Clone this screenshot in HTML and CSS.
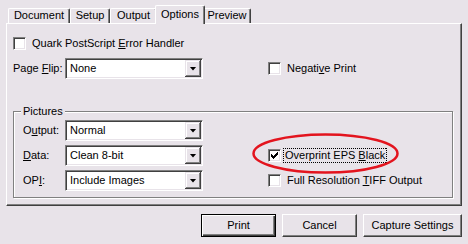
FILE: index.html
```html
<!DOCTYPE html>
<html lang="en">
  <head>
    <meta charset="UTF-8" />
    <title>Print Options</title>
    <link rel="stylesheet" href="styles.css">
  </head>
  <body>
    <div class="dialog">
      <div class="tabs">
        <div class="tab tab-document">Document</div>
        <div class="tab tab-setup">Setup</div>
        <div class="tab tab-output">Output</div>
        <div class="tab tab-options selected">Options</div>
        <div class="tab tab-preview">Preview</div>
      </div>

      <div class="panel">
        <label class="check-row">
          <span class="box"></span>
          <span>Quark PostScript <u>E</u>rror Handler</span>
        </label>

        <div class="fields top-fields">
          <span>Page <u>F</u>lip:</span>
          <div class="combo">
            <span class="combo-text">None</span>
            <span class="combo-btn"></span>
          </div>
          <span></span>
          <label class="check-row">
            <span class="box"></span>
            <span>Negati<u>v</u>e Print</span>
          </label>
        </div>

        <fieldset class="group">
          <legend>Pictures</legend>
          <div class="fields">
            <span>O<u>u</u>tput:</span>
            <div class="combo">
              <span class="combo-text">Normal</span>
              <span class="combo-btn"></span>
            </div>
            <span></span>
            <span></span>

            <span><u>D</u>ata:</span>
            <div class="combo">
              <span class="combo-text">Clean 8-bit</span>
              <span class="combo-btn"></span>
            </div>
            <span></span>
            <label class="check-row">
              <span class="box checked">
                <svg width="7" height="7" viewBox="0 0 7 7"><path d="M0 2L2 4L7 -1L7 2L2 7L0 5Z" fill="#000" /></svg>
              </span>
              <span class="focus">Overprint EPS <u>B</u>lack</span>
            </label>

            <span>OP<u>I</u>:</span>
            <div class="combo">
              <span class="combo-text">Include Images</span>
              <span class="combo-btn"></span>
            </div>
            <span></span>
            <label class="check-row">
              <span class="box"></span>
              <span>Full Resolution <u>T</u>IFF Output</span>
            </label>
          </div>
        </fieldset>
      </div>

      <div class="buttons">
        <button class="btn btn-default btn-print">Print</button>
        <button class="btn btn-cancel">Cancel</button>
        <button class="btn btn-capture">Capture Settings</button>
      </div>

      <!-- red marker drawn over the dialog -->
      <svg class="highlight" width="148" height="41" viewBox="0 0 148 41">
        <ellipse cx="73.5" cy="20.5" rx="72" ry="19" fill="none" stroke="#e3141e" stroke-width="2.5" />
      </svg>
    </div>
  </body>
</html>
```

FILE: styles.css
```css
body {
  margin: 0;
  background: #e8e3e9;
  font-family: "Liberation Sans", Arial, sans-serif;
  font-size: 11px;
  line-height: 13px;
  color: #000;
}

.dialog {
  position: relative;
  padding: 5px 6px 0;
}

/* tab strip */
.tabs {
  display: flex;
  align-items: flex-end;
  height: 18px;
  padding-left: 2px;
}

.tab {
  box-sizing: border-box;
  height: 15px;
  border-top: 1px solid #fff;
  border-left: 1px solid #fff;
  border-right: 1px solid #404040;
  border-radius: 2px 2px 0 0;
  box-shadow: inset -1px 0 #808080;
  text-align: center;
}

.tab-document { width: 62px; }
.tab-setup { width: 40px; }
.tab-output { width: 47px; }
.tab-options { width: 46px; }
.tab-preview { width: 48px; }

.tab.selected {
  position: relative;
  z-index: 1;
  width: 50px;
  height: 19px;
  margin: 0 -2px -1px;
  padding-top: 2px;
  background: #e8e3e9;
}

/* page */
.panel {
  border: 1px solid;
  border-color: #fff #404040 #404040 #fff;
  box-shadow: inset -1px -1px #808080;
  padding: 13px 8px 7px 6px;
}

.check-row {
  display: flex;
  align-items: center;
  gap: 6px;
}

.box {
  box-sizing: border-box;
  width: 13px;
  height: 13px;
  flex: none;
  border: 1px solid;
  border-color: #808080 #fff #fff #808080;
  box-shadow: inset 1px 1px #404040, inset -1px -1px #e8e3e9;
  background: #fff;
}

.box.checked {
  display: flex;
  align-items: center;
  justify-content: center;
}

.box svg {
  display: block;
  shape-rendering: crispEdges;
}

/* dotted focus rectangle, one pixel on / one off */
.focus {
  margin-left: -4px;
  padding: 1px 2px;
  background:
    repeating-linear-gradient(90deg, #000 0 1px, transparent 1px 2px) top / 100% 1px no-repeat,
    repeating-linear-gradient(90deg, #000 0 1px, transparent 1px 2px) bottom / 100% 1px no-repeat,
    repeating-linear-gradient(180deg, #000 0 1px, transparent 1px 2px) left / 1px 100% no-repeat,
    repeating-linear-gradient(180deg, #000 0 1px, transparent 1px 2px) right / 1px 100% no-repeat;
}

.fields {
  display: grid;
  grid-template-columns: 42px 138px 65px auto;
  grid-auto-rows: 21px;
  row-gap: 4px;
  align-items: center;
}

.top-fields {
  grid-template-columns: 52px 138px 65px auto;
  margin-top: 8px;
}

.combo {
  box-sizing: border-box;
  height: 21px;
  display: flex;
  padding: 1px;
  border: 1px solid;
  border-color: #808080 #fff #fff #808080;
  box-shadow: inset 1px 1px #404040, inset -1px -1px #e8e3e9;
  background: #fff;
}

.combo-text {
  flex: 1;
  padding-left: 3px;
  align-self: center;
}

.combo-btn {
  width: 16px;
  display: flex;
  align-items: center;
  justify-content: center;
  background: #e8e3e9;
  box-shadow: inset -1px -1px #404040, inset 1px 1px #e8e3e9, inset -2px -2px #808080, inset 2px 2px #fff;
}

.combo-btn::after {
  content: "";
  width: 7px;
  height: 4px;
  background: #000;
  clip-path: polygon(0 0, 100% 0, 50% 100%);
}

/* Pictures group */
.group {
  margin: 26px 0 0;
  padding: 2px 0 6px 9px;
  min-inline-size: 0;
  border: 1px solid #808080;
  box-shadow: inset 1px 1px #fff, 1px 1px #fff;
}

.group legend {
  margin-left: -2px;
  padding: 0 2px;
  background: #e8e3e9;
}

/* dialog buttons */
.buttons {
  display: flex;
  justify-content: flex-end;
  gap: 6px;
  margin-top: 8px;
}

.btn {
  box-sizing: border-box;
  height: 23px;
  padding: 0;
  border: 1px solid;
  border-color: #fff #404040 #404040 #fff;
  box-shadow: inset -1px -1px #808080;
  background: #e8e3e9;
  font: inherit;
  color: #000;
}

.btn-default {
  border-color: #000;
  box-shadow: inset 1px 1px #fff, inset -1px -1px #404040, inset -2px -2px #808080;
}

.btn-print { width: 75px; }
.btn-cancel { width: 75px; }
.btn-capture { width: 99px; }

.highlight {
  position: absolute;
  left: 252px;
  top: 133px;
}
```
